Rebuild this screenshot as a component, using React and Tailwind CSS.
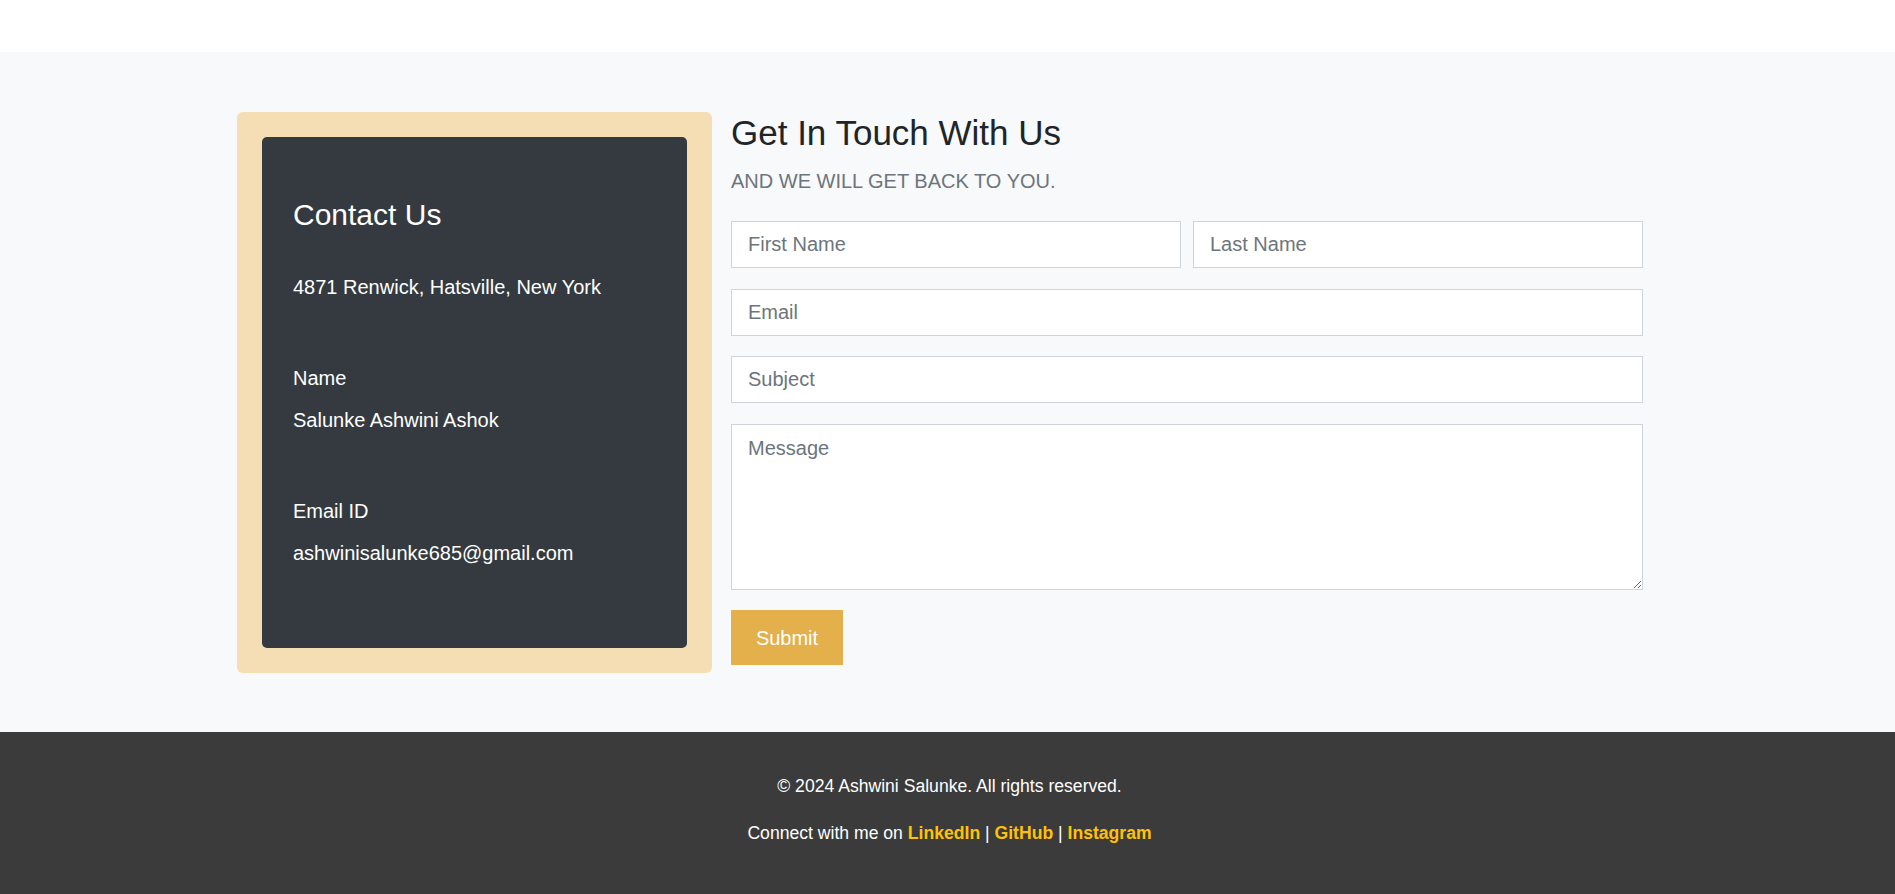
export default function App() {
  const inputCls =
    "w-full h-[47px] border border-[#ced4da] bg-white px-4 text-[20px] text-[#212529] placeholder:text-[#6c757d] outline-none";
  return (
    <div className="min-h-screen bg-white font-['Liberation_Sans',Arial,sans-serif]">
      <div className="h-[52px] bg-white" />
      <section className="bg-[#f8f9fa] pt-[60px] pb-[59px]">
        <div className="ml-[237px] w-[1406px] flex items-start gap-[19px]">
          <div className="w-[475px] shrink-0 rounded-md bg-[#f5deb3] p-[25px]">
            <div className="rounded-[5px] bg-[#343a40] pl-[31px] pr-[30px] pt-[60px] pb-[80px] text-white">
              <h3 className="text-[30px] leading-[36px]">Contact Us</h3>
              <p className="mt-[39px] text-[20px] leading-[30px]">4871 Renwick, Hatsville, New York</p>
              <p className="mt-[61px] text-[20px] leading-[30px]">Name</p>
              <p className="mt-[12px] text-[20px] leading-[30px]">Salunke Ashwini Ashok</p>
              <p className="mt-[61px] text-[20px] leading-[30px]">Email ID</p>
              <p className="mt-[12px] text-[20px] leading-[30px]">ashwinisalunke685@gmail.com</p>
            </div>
          </div>
          <div className="flex-1">
            <h2 className="text-[35px] leading-[41px] text-[#212529]">Get In Touch With Us</h2>
            <p className="mt-[13px] text-[20px] leading-[30px] text-[#6c757d]">AND WE WILL GET BACK TO YOU.</p>
            <form className="mt-[25px] flex flex-col items-start gap-[20.5px]" onSubmit={(e) => e.preventDefault()}>
              <div className="grid w-full grid-cols-2 gap-3">
                <input className={inputCls} placeholder="First Name" />
                <input className={inputCls} placeholder="Last Name" />
              </div>
              <input className={inputCls} placeholder="Email" />
              <input className={inputCls} placeholder="Subject" />
              <textarea
                className="block w-full h-[166px] border border-[#ced4da] bg-white px-4 py-2 text-[20px] leading-[1.5] text-[#212529] placeholder:text-[#6c757d] outline-none"
                placeholder="Message"
              />
              <button type="submit" className="h-[55px] w-[112px] bg-[#e3b04b] text-[20px] text-white">
                Submit
              </button>
            </form>
          </div>
        </div>
      </section>
      <footer className="bg-[#3b3b3b] pl-[4px] pt-[41px] pb-[48px] text-center text-[17.6px] leading-[26px] text-white">
        <p>© 2024 Ashwini Salunke. All rights reserved.</p>
        <p className="mt-[21px]">
          Connect with me on <a href="#" className="font-bold text-[#ffc107]">LinkedIn</a> |{" "}
          <a href="#" className="font-bold text-[#ffc107]">GitHub</a> |{" "}
          <a href="#" className="font-bold text-[#ffc107]">Instagram</a>
        </p>
      </footer>
    </div>
  );
}
